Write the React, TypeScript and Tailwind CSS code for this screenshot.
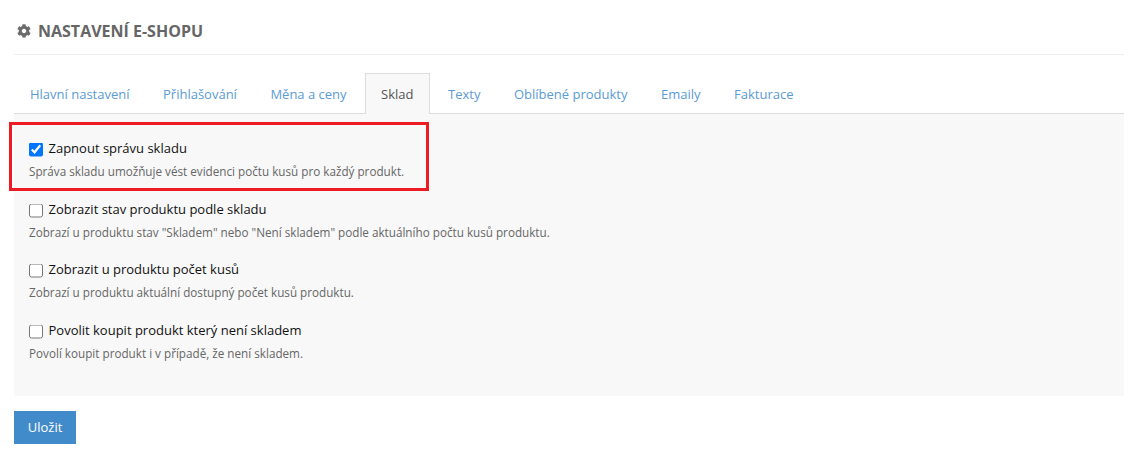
import { FaCog } from "react-icons/fa";

const tabs = ["Hlavní nastavení", "Přihlašování", "Měna a ceny", "Sklad", "Texty", "Oblíbené produkty", "Emaily", "Fakturace"];

const options = [
  {
    label: "Zapnout správu skladu",
    help: "Správa skladu umožňuje vést evidenci počtu kusů pro každý produkt.",
    checked: true,
  },
  {
    label: "Zobrazit stav produktu podle skladu",
    help: 'Zobrazí u produktu stav "Skladem" nebo "Není skladem" podle aktuálního počtu kusů produktu.',
    checked: false,
  },
  {
    label: "Zobrazit u produktu počet kusů",
    help: "Zobrazí u produktu aktuální dostupný počet kusů produktu.",
    checked: false,
  },
  {
    label: "Povolit koupit produkt který není skladem",
    help: "Povolí koupit produkt i v případě, že není skladem.",
    checked: false,
  },
];

export default function App() {
  return (
    <div className="relative h-[461px] w-[1137px] overflow-hidden bg-white pl-[14px] pr-[13px] font-['Open_Sans',sans-serif] text-[13px]">
      {/* Nadpis */}
      <div className="flex h-[55px] items-center gap-[7px] border-b border-[#eeeeee] pl-[3px] pt-[7px]">
        <FaCog className="h-[14px] w-[14px] text-[#6b6b6b]" />
        <h1 className="text-[16px] font-bold text-[#666666]">NASTAVENÍ E-SHOPU</h1>
      </div>

      {/* Záložky */}
      <div className="mt-[18px] flex h-[41px] gap-[3.5px] border-b border-[#dddddd] pl-[1px]">
        {tabs.map((tab) =>
          tab === "Sklad" ? (
            <div
              key={tab}
              className="h-[41px] border border-b-0 border-[#dddddd] bg-[#f8f8f8] px-[15px] pt-[11px] leading-[18px] text-[#555555]"
            >
              {tab}
            </div>
          ) : (
            <div key={tab} className="px-[15px] pt-[12px] leading-[18px] text-[#5b9bd5]">
              {tab}
            </div>
          ),
        )}
      </div>

      {/* Obsah */}
      <div className="flex h-[282px] flex-col gap-[20.67px] bg-[#f8f8f8] px-[15px] pt-[25px]">
        {options.map((option) => (
          <div key={option.label} className="h-[40px]">
            <label className="flex h-[18px] items-center gap-[5.5px] leading-[18px] text-[#111111]">
              <input type="checkbox" defaultChecked={option.checked} className="m-0 h-[14px] w-[14px] translate-y-[1.5px]" />
              {option.label}
            </label>
            <p className="mt-[6px] text-[11.7px] leading-[17px] text-[#666666]">{option.help}</p>
          </div>
        ))}
      </div>

      <button className="mt-[15px] h-[33px] w-[62px] bg-[#428bca] text-[13px] text-white">Uložit</button>

      {/* Červené zvýraznění */}
      <div className="absolute left-[9px] top-[122px] h-[69px] w-[420px] border-[3px] border-[#ed1c24]" />
    </div>
  );
}
